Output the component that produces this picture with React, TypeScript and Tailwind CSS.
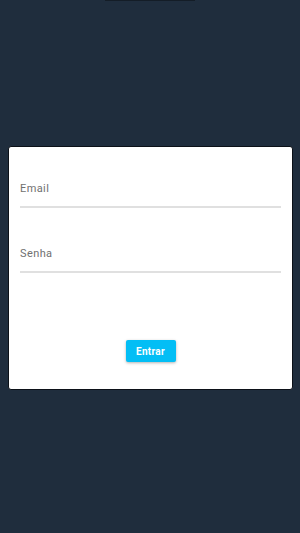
import React from "react";

const Field = ({ label }: { label: string }) => {
    return (
        <div className="border-b-2 border-[#e0e0e0] pb-[9px]">
            <span className="block text-[11px] leading-[16px] text-[#707070] tracking-[0.4px]">{label}</span>
        </div>
    );
};

const App = () => {
    return (
        <div className="min-h-screen bg-[#1f2d3d] flex flex-col font-['Roboto',sans-serif]">
            <div className="mx-auto w-[90px] h-[1px] bg-[#141d27]" />
            <div className="mt-[145px] ml-[8px] w-[285px] h-[244px] bg-white rounded-[3px] border border-[#0c1118] px-[11px] pt-[34px] flex flex-col">
                <Field label="Email" />
                <div className="h-[38px]" />
                <Field label="Senha" />
                <div className="flex justify-center mt-[67px]">
                    <button className="w-[50px] h-[22px] bg-[#03bef5] rounded-[2px] text-white text-[10px] font-bold tracking-[0.3px] shadow-[0_1px_3px_rgba(0,0,0,0.3)]">
                        Entrar
                    </button>
                </div>
            </div>
        </div>
    );
};

export default App;
